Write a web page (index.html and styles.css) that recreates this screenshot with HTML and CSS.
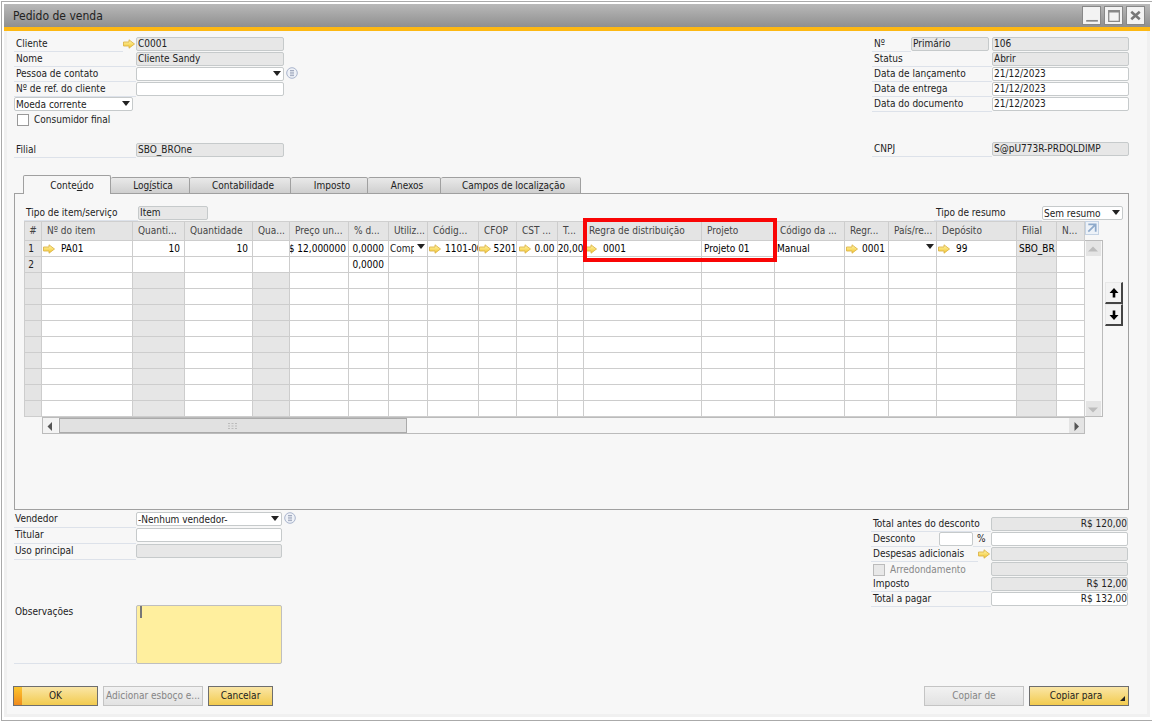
FILE: index.html
```html
<!DOCTYPE html>
<html lang="pt-BR">
<head>
<meta charset="utf-8">
<title>Pedido de venda</title>
<link rel="stylesheet" href="styles.css">
</head>
<body>
<svg class="defs" width="0" height="0" aria-hidden="true">
  <defs>
    <linearGradient id="gold" x1="0" y1="0" x2="0" y2="1"><stop offset="0" stop-color="#fff7b0"/><stop offset="1" stop-color="#f2c42c"/></linearGradient>
    <symbol id="arrow" viewBox="0 0 12 10"><path d="M.5 3h5.500V.8L11.500 5 6 9.200V7H.5z" fill="url(#gold)" stroke="#dcb44a" stroke-width=".9"/></symbol>
    <symbol id="list" viewBox="0 0 12 12"><circle cx="6" cy="6" r="5.300" fill="#eef1f7" stroke="#a9b4cc"/><path d="M4 3.500h4M4 5.200h4M4 6.900h4M4 8.600h4" stroke="#98a2b8" stroke-width=".9"/></symbol>
  </defs>
</svg>
<main class="window">
  <header class="titlebar">
    <h1 class="title">Pedido de venda</h1>
    <div class="winbtns">
      <button class="winbtn" aria-label="Minimizar"><svg viewBox="0 0 16 16"><path d="M3 13h11" stroke="#888" stroke-width="1.600"/></svg></button>
      <button class="winbtn" aria-label="Maximizar"><svg viewBox="0 0 16 16"><path d="M3.500 3.500h10v10h-10zM3 4.500h11" fill="none" stroke="#888" stroke-width="1.200"/></svg></button>
      <button class="winbtn" aria-label="Fechar"><svg viewBox="0 0 16 16"><path d="M4 4.500l8 7M12 4.500l-8 7" stroke="#777" stroke-width="2.400"/></svg></button>
    </div>
  </header>

  <form class="content">
    <section class="top">
      <div class="left">
        <div class="row"><label class="lbl" for="cliente">Cliente</label><button type="button" class="link" aria-label="Abrir cliente"><svg><use href="#arrow"/></svg></button><input class="inp ro" id="cliente" value="C0001" readonly></div>
        <div class="row"><label class="lbl" for="nome">Nome</label><input class="inp ro" id="nome" value="Cliente Sandy" readonly></div>
        <div class="row"><label class="lbl" for="contato">Pessoa de contato</label><span class="sel"><select id="contato"><option></option></select></span><button type="button" class="info" aria-label="Detalhes do contato"><svg><use href="#list"/></svg></button></div>
        <div class="row"><label class="lbl" for="ref">Nº de ref. do cliente</label><input class="inp" id="ref"></div>
        <div class="row"><span class="sel moeda"><select aria-label="Moeda"><option>Moeda corrente</option></select></span></div>
        <div class="row"><label class="check"><input type="checkbox">Consumidor final</label></div>
        <div class="row gap"><label class="lbl" for="filial">Filial</label><output class="inp ro" id="filial">SBO_BROne</output></div>
      </div>
      <div class="right">
        <div class="row"><label class="lbl" for="num">Nº</label><input class="inp ro serie" aria-label="Série" value="Primário" readonly><input class="inp ro" id="num" value="106" readonly></div>
        <div class="row"><label class="lbl" for="status">Status</label><input class="inp ro" id="status" value="Abrir" readonly></div>
        <div class="row"><label class="lbl" for="dl">Data de lançamento</label><input class="inp" id="dl" value="21/12/2023"></div>
        <div class="row"><label class="lbl" for="de">Data de entrega</label><input class="inp" id="de" value="21/12/2023"></div>
        <div class="row"><label class="lbl" for="dd">Data do documento</label><input class="inp" id="dd" value="21/12/2023"></div>
        <div class="row gap2"><label class="lbl" for="cnpj">CNPJ</label><input class="inp ro" id="cnpj" value="S@pU773R-PRDQLDIMP" readonly></div>
      </div>
    </section>

    <nav class="tabs" role="tablist">
      <button type="button" role="tab" class="tab active w1" aria-selected="true">Conte<u>ú</u>do</button>
      <button type="button" role="tab" class="tab w2">Log<u>í</u>stica</button>
      <button type="button" role="tab" class="tab w3">Contabilidade</button>
      <button type="button" role="tab" class="tab w4">Imposto</button>
      <button type="button" role="tab" class="tab w5">Anexos</button>
      <button type="button" role="tab" class="tab w6">Campos de locali<u>z</u>ação</button>
    </nav>

    <section class="panel">
      <div class="filters">
        <div class="row tipo"><label class="lbl" for="tipo">Tipo de item/serviço</label><input class="inp ro" id="tipo" value="Item" readonly></div>
        <div class="row resumo"><label class="lbl" for="resumo">Tipo de resumo</label><span class="sel"><select id="resumo"><option>Sem resumo</option></select></span></div>
      </div>
      <div class="gridarea">
        <div class="gridmain">
          <table class="grid">
            <colgroup><col class="c18"><col class="c91"><col class="c52"><col class="c68"><col class="c37"><col class="c59"><col class="c40"><col class="c39"><col class="c51"><col class="c38"><col class="c41"><col class="c26"><col class="c118"><col class="c73"><col class="c70"><col class="c44"><col class="c48"><col class="c80"><col class="c40"><col class="c28"></colgroup>
            <thead><tr><th class="num">#</th><th>Nº do item</th><th>Quanti...</th><th>Quantidade</th><th>Qua...</th><th>Preço un...</th><th>% d...</th><th>Utiliz...</th><th>Códig...</th><th>CFOP</th><th>CST ...</th><th>T...</th><th class="marked">Regra de distribuição<span class="mark"></span></th><th>Projeto</th><th>Código da ...</th><th>Regr...</th><th>País/re...</th><th>Depósito</th><th>Filial</th><th>N...</th></tr></thead>
            <tbody>
              <tr><td class="num">1</td><td><div class="cell"><svg><use href="#arrow"/></svg>PA01</div></td><td><div class="cell end">10</div></td><td><div class="cell end">10</div></td><td></td><td><div class="cell end slim">R$ 12,000000</div></td><td><div class="cell end">0,0000</div></td><td><span class="sel flat"><select aria-label="Utilização"><option>Compra</option></select></span></td><td><div class="cell near"><svg><use href="#arrow"/></svg>1101-001</div></td><td><div class="cell fit"><svg><use href="#arrow"/></svg>5201</div></td><td><div class="cell fit"><svg><use href="#arrow"/></svg>0.00</div></td><td><div class="cell fit">20,00</div></td><td><div class="cell"><svg><use href="#arrow"/></svg>0001</div></td><td><div class="cell pad">Projeto 01</div></td><td><div class="cell pad">Manual</div></td><td><div class="cell near"><svg><use href="#arrow"/></svg>0001</div></td><td><span class="sel flat"><select aria-label="País/região"><option></option></select></span></td><td><div class="cell"><svg><use href="#arrow"/></svg>99</div></td><td><div class="cell pad">SBO_BR</div></td><td></td></tr>
              <tr><td class="num">2</td><td></td><td></td><td></td><td></td><td></td><td><div class="cell end">0,0000</div></td><td></td><td></td><td></td><td></td><td></td><td></td><td></td><td></td><td></td><td></td><td></td><td></td><td></td></tr>
              <tr class="empty"><td class="num"></td><td></td><td></td><td></td><td></td><td></td><td></td><td></td><td></td><td></td><td></td><td></td><td></td><td></td><td></td><td></td><td></td><td></td><td></td><td></td></tr>
              <tr class="empty"><td class="num"></td><td></td><td></td><td></td><td></td><td></td><td></td><td></td><td></td><td></td><td></td><td></td><td></td><td></td><td></td><td></td><td></td><td></td><td></td><td></td></tr>
              <tr class="empty"><td class="num"></td><td></td><td></td><td></td><td></td><td></td><td></td><td></td><td></td><td></td><td></td><td></td><td></td><td></td><td></td><td></td><td></td><td></td><td></td><td></td></tr>
              <tr class="empty"><td class="num"></td><td></td><td></td><td></td><td></td><td></td><td></td><td></td><td></td><td></td><td></td><td></td><td></td><td></td><td></td><td></td><td></td><td></td><td></td><td></td></tr>
              <tr class="empty"><td class="num"></td><td></td><td></td><td></td><td></td><td></td><td></td><td></td><td></td><td></td><td></td><td></td><td></td><td></td><td></td><td></td><td></td><td></td><td></td><td></td></tr>
              <tr class="empty"><td class="num"></td><td></td><td></td><td></td><td></td><td></td><td></td><td></td><td></td><td></td><td></td><td></td><td></td><td></td><td></td><td></td><td></td><td></td><td></td><td></td></tr>
              <tr class="empty"><td class="num"></td><td></td><td></td><td></td><td></td><td></td><td></td><td></td><td></td><td></td><td></td><td></td><td></td><td></td><td></td><td></td><td></td><td></td><td></td><td></td></tr>
              <tr class="empty"><td class="num"></td><td></td><td></td><td></td><td></td><td></td><td></td><td></td><td></td><td></td><td></td><td></td><td></td><td></td><td></td><td></td><td></td><td></td><td></td><td></td></tr>
              <tr class="empty"><td class="num"></td><td></td><td></td><td></td><td></td><td></td><td></td><td></td><td></td><td></td><td></td><td></td><td></td><td></td><td></td><td></td><td></td><td></td><td></td><td></td></tr>
            </tbody>
          </table>
          <div class="hscroll">
            <button type="button" class="sbtn" aria-label="Rolar para a esquerda"><svg viewBox="0 0 14 14"><path d="M9 3v9L4.500 7.500z" fill="#555"/></svg></button>
            <div class="thumb"><svg viewBox="0 0 10 8"><path d="M0 1.500h2M3.500 1.500h2M7 1.500h2M0 4h2M3.500 4h2M7 4h2M0 6.500h2M3.500 6.500h2M7 6.500h2" stroke="#bbb"/></svg></div>
            <div class="space"></div>
            <button type="button" class="sbtn grey" aria-label="Rolar para a direita"><svg viewBox="0 0 14 14"><path d="M5.500 3v9L10 7.500z" fill="#555"/></svg></button>
          </div>
        </div>
        <div class="vcol">
          <button type="button" class="expand" aria-label="Expandir"><svg viewBox="0 0 13 13"><path d="M2.500 2.500h8v8M10.500 2.500L2.500 10.500" fill="none" stroke="#8eaacb" stroke-width="1.900"/></svg></button>
          <div class="vscroll">
            <button type="button" class="sbtn grey" aria-label="Rolar para cima"><svg viewBox="0 0 14 14"><path d="M2 9.500h10L7 4.500z" fill="#bcbcbc"/></svg></button>
            <button type="button" class="sbtn grey" aria-label="Rolar para baixo"><svg viewBox="0 0 14 14"><path d="M2 5.500h10L7 10.500z" fill="#bcbcbc"/></svg></button>
          </div>
        </div>
        <div class="movers">
          <button type="button" class="mover" aria-label="Mover para cima"><svg viewBox="0 0 12 12"><path d="M6 1l4.500 5H7.300v4.500H4.700V6H1.500z"/></svg></button>
          <button type="button" class="mover" aria-label="Mover para baixo"><svg viewBox="0 0 12 12"><path d="M6 11l4.500-5H7.300V1.500H4.700V6H1.500z"/></svg></button>
        </div>
      </div>
    </section>

    <section class="bottom">
      <div class="left low">
        <div class="row"><label class="lbl" for="vend">Vendedor</label><span class="sel"><select id="vend"><option>-Nenhum vendedor-</option></select></span><button type="button" class="info" aria-label="Detalhes do vendedor"><svg><use href="#list"/></svg></button></div>
        <div class="row"><label class="lbl" for="tit">Titular</label><input class="inp" id="tit"></div>
        <div class="row"><label class="lbl" for="uso">Uso principal</label><input class="inp ro" id="uso" readonly></div>
        <div class="row notes"><label class="lbl" for="obs">Observações</label><div class="area"><textarea id="obs"></textarea><span class="caret"></span></div></div>
      </div>
      <div class="right totals">
        <div class="row"><label class="lbl" for="t1">Total antes do desconto</label><input class="inp ro" id="t1" value="R$ 120,00" readonly></div>
        <div class="row"><label class="lbl" for="t2">Desconto</label><input class="inp pct" id="t2"><label class="lbl unit" for="t2b">%</label><input class="inp" id="t2b"></div>
        <div class="row"><label class="lbl" for="t3">Despesas adicionais</label><button type="button" class="link" aria-label="Abrir despesas"><svg><use href="#arrow"/></svg></button><input class="inp ro" id="t3" readonly></div>
        <div class="row"><label class="check off"><input type="checkbox" disabled>Arredondamento</label><input class="inp ro" aria-label="Valor do arredondamento" readonly></div>
        <div class="row"><label class="lbl" for="t5">Imposto</label><input class="inp ro" id="t5" value="R$ 12,00" readonly></div>
        <div class="row"><label class="lbl" for="t6">Total a pagar</label><input class="inp" id="t6" value="R$ 132,00"></div>
      </div>
    </section>

    <footer class="actions">
      <button type="button" class="btn ok">OK</button>
      <button type="button" class="btn wide" disabled>Adicionar esboço e...</button>
      <button type="button" class="btn">Cancelar</button>
      <span class="space"></span>
      <button type="button" class="btn wide" disabled>Copiar de</button>
      <button type="button" class="btn wide menu">Copiar para</button>
    </footer>
  </form>
</main>
</body>
</html>
```
FILE: styles.css
```css
* { box-sizing: border-box; }
body { margin: 0; padding: 1px 0 1px 1px; background: #fff; }
body, button, input, select, textarea {
  font-family: "DejaVu Sans Condensed", "DejaVu Sans", sans-serif;
  font-size: 10px;
  color: #222;
}
button { padding: 0; margin: 0; }
.defs { position: absolute; }

.window {
  min-height: calc(100vh - 2px);
  display: flex;
  flex-direction: column;
  border: 1px solid #aaa;
  border-right: 0;
  padding: 2px 2px 3px;
}
.titlebar {
  display: flex;
  align-items: center;
  justify-content: space-between;
  height: 27px;
  padding: 0 5px 0 9px;
  background: linear-gradient(#b9b9b9, #8f8f8f);
  border-bottom: 4px solid #fdb813;
}
.title { margin: 0; font-size: 12px; font-weight: normal; }
.winbtns { display: flex; gap: 3px; }
.winbtn { width: 19px; height: 19px; border: 1px solid #888; background: #f3f3f3; }
.winbtn svg { display: block; width: 17px; height: 17px; }

.content {
  flex: 1;
  display: flex;
  flex-direction: column;
  padding: 6px 18px 8px 7px;
  background: #f7f7f7;
  border: solid #f0f0f0;
  border-width: 0 3px 3px;
}
.top, .bottom { display: flex; justify-content: space-between; }
.left { width: 290px; }
.right { width: 257px; }
.row { display: flex; height: 15px; }
.gap { margin-top: 16px; }
.gap2 { margin-top: 30px; }
.lbl {
  flex: 1;
  padding-left: 2px;
  line-height: 14px;
  white-space: nowrap;
  border-bottom: 1px solid #dde2ea;
}
.left .row { width: 270px; }
.left .inp, .left .sel { width: 148px; }
.right .inp { width: 137px; }
.inp, .sel {
  height: 14px;
  padding: 0 1px 1px;
  border: 1px solid #c6cacb;
  border-radius: 2px;
  background: #fff;
  outline: 0;
}
.inp.ro { background: #e7e7e7; }
output.inp { line-height: 11px; }
.right .serie { width: 78px; margin-right: 3px; }
.link { width: 12px; height: 14px; border: 0; background: none; margin-right: 1px; }
.link svg { display: block; width: 12px; height: 10px; }
.info { width: 12px; height: 12px; margin-left: 2px; border: 0; background: none; }
.left .info { margin-right: -14px; }
.info svg { display: block; width: 12px; height: 12px; }
.sel { position: relative; display: block; padding: 0; }
.sel select {
  display: block;
  width: 100%;
  height: 12px;
  padding: 0 1px;
  border: 0;
  appearance: none;
  background: none;
  outline: 0;
}
.sel::after {
  content: "";
  position: absolute;
  right: 2px;
  top: 3px;
  border: 4px solid transparent;
  border-top: 5px solid #222;
  border-bottom: 0;
  pointer-events: none;
}
.left .moeda { width: 119px; }
.check { display: flex; align-items: center; flex: 1; gap: 5px; padding-left: 3px; line-height: 14px; }
.check input {
  appearance: none;
  width: 12px;
  height: 12px;
  margin: 0;
  border: 1px solid #999;
  background: #fff;
}
.check.off { color: #888; padding-left: 2px; }
.check.off input { background: #e8e8e8; border-color: #bbb; }

.tabs { display: flex; align-items: flex-end; margin: 17px 0 -1px 9px; height: 19px; position: relative; }
.tab {
  height: 17px;
  border: 1px solid #a0a0a0;
  border-left: 0;
  border-radius: 2px 2px 0 0;
  background: linear-gradient(#e9e9e9, #cfcfcf);
  white-space: nowrap;
}
.tab.active { height: 19px; border-left: 1px solid #a0a0a0; border-bottom: 0; background: #f7f7f7; }
.w1 { width: 88px; padding-left: 10px; }
.w2 { width: 79px; padding-left: 6px; }
.w3 { width: 101px; padding-left: 6px; }
.w4 { width: 77px; padding-left: 6px; }
.w5 { width: 73px; padding-left: 6px; }
.w6 { width: 140px; padding-left: 6px; }

.panel {
  padding: 12px 5px 75px 9px;
  border: 1px solid #a0a0a0;
}
.filters { display: flex; justify-content: space-between; }
.tipo { width: 184px; }
.tipo .inp { width: 70px; }
.resumo { width: 189px; }
.resumo .sel { width: 81px; }
.gridarea { display: flex; }
.gridmain { flex: 1; min-width: 0; }
.grid {
  width: 100%;
  table-layout: fixed;
  border-collapse: separate;
  border-spacing: 0;
  border-top: 1px solid #cfcfcf;
}
.c18 { width: 18px; } .c91 { width: 91px; } .c52 { width: 52px; } .c68 { width: 68px; }
.c37 { width: 37px; } .c59 { width: 59px; } .c40 { width: 40px; } .c39 { width: 39px; }
.c51 { width: 51px; } .c38 { width: 38px; } .c41 { width: 41px; } .c26 { width: 26px; }
.c118 { width: 118px; } .c73 { width: 73px; } .c70 { width: 70px; } .c44 { width: 44px; }
.c48 { width: 48px; } .c80 { width: 80px; } .c28 { width: 28px; }
.grid th, .grid td {
  padding: 0;
  border-right: 1px solid #cdcdcd;
  border-bottom: 1px solid #cdcdcd;
}
.grid th {
  height: 19px;
  padding: 0 0 2px 5px;
  font-weight: normal;
  text-align: left;
  white-space: nowrap;
  color: #444;
  background: #e4e4e4;
}
.grid td { height: 16px; background: #fff; }
.grid .num { padding-left: 0; text-align: center; background: #e4e4e4; border-left: 1px solid #cdcdcd; }
.grid td.num { padding-right: 4px; }
.grid .empty td:nth-child(3),
.grid .empty td:nth-child(5),
.grid tr td:nth-child(19) { background: #e6e6e6; }
.grid .marked { position: relative; }
.mark {
  position: absolute;
  z-index: 1;
  left: -1px;
  top: -4px;
  width: calc(100% + 77px);
  height: 44px;
  border: 4px solid #f90505;
}
.cell { display: flex; align-items: center; gap: 6px; height: 15px; padding: 0 1px; overflow: hidden; white-space: nowrap; color: #000; }
.cell svg { flex: none; width: 12px; height: 10px; }
.end { justify-content: flex-end; padding-right: 4px; }
.slim { padding-right: 2px; }
.pad { padding: 0 2px; }
.near { gap: 4px; }
.fit { gap: 3px; padding: 0; overflow: visible; justify-content: center; }
.flat { height: 15px; border: 0; background: none; }
.flat select { height: 15px; padding-right: 13px; }

.hscroll { display: flex; height: 17px; margin-left: 18px; border: 1px solid #bbb; }
.sbtn { width: 15px; height: 15px; border: 0; background: #f3f3f3; }
.sbtn.grey { background: #e4e4e4; }
.sbtn svg { display: block; width: 14px; height: 14px; }
.thumb { display: flex; align-items: center; justify-content: center; width: 348px; margin-left: 1px; border: 1px solid #aaa; background: #e1e1e1; }
.thumb svg { width: 10px; height: 8px; }
.space { flex: 1; }
.vcol { display: flex; flex-direction: column; width: 18px; padding-bottom: 17px; }
.expand { width: 14px; height: 14px; margin: 0 0 5px; border: 1px solid #c5d3e4; background: #edf2f8; }
.expand svg { display: block; width: 12px; height: 12px; }
.vscroll {
  flex: 1;
  display: flex;
  flex-direction: column;
  justify-content: space-between;
  align-items: center;
  border: 1px solid #bbb;
  border-left: 0;
}
.movers { display: flex; flex-direction: column; width: 20px; padding: 61px 0 0 2px; }
.mover {
  width: 18px;
  height: 22px;
  background: #f3f3f3;
  border: solid;
  border-width: 1px 2px 2px 1px;
  border-color: #e8e8e8 #444 #444 #e8e8e8;
}
.mover svg { display: block; width: 12px; height: 12px; margin: auto; }

.bottom { padding-top: 2px; }
.low .row { height: 16px; width: 268px; }
.low .lbl { padding-left: 1px; }
.left.low .inp, .left.low .sel { width: 146px; }
.low .row.notes { height: 59px; margin-top: 45px; }
.area { position: relative; display: flex; width: 146px; }
.area textarea { width: 100%; resize: none; border: 1px solid #bfbfbf; border-radius: 2px; background: #ffef9e; outline: 0; }
.caret { position: absolute; left: 4px; top: 1px; width: 2px; height: 12px; background: #777; }
.right.totals { padding-top: 5px; margin-right: 1px; }
.totals .inp { text-align: right; padding-right: 0; }
.totals .pct { width: 34px; }
.totals .unit { flex: none; width: 18px; padding-left: 4px; }

.actions { display: flex; margin: 22px 0 0 -1px; }
.btn {
  height: 20px;
  width: 65px;
  margin-right: 5px;
  padding-bottom: 2px;
  white-space: nowrap;
  border: 1px solid #6e6e6e;
  background: linear-gradient(#fae6a6, #f2cb4e);
}
.btn.wide { width: 100px; }
.btn:disabled { color: #858585; border-color: #c4c4c4; background: linear-gradient(#f2f2f2, #e2e2e2); }
.btn.ok { width: 85px; background: linear-gradient(#fcc62f, #f08a1c) no-repeat 0 0 / 8px 100%, linear-gradient(#fae6a6, #f2cb4e); }
.btn.menu { position: relative; margin-right: 0; padding-right: 6px; }
.menu::after {
  content: "";
  position: absolute;
  right: 3px;
  bottom: 4px;
  border-left: 5px solid transparent;
  border-bottom: 5px solid #222;
}
```
